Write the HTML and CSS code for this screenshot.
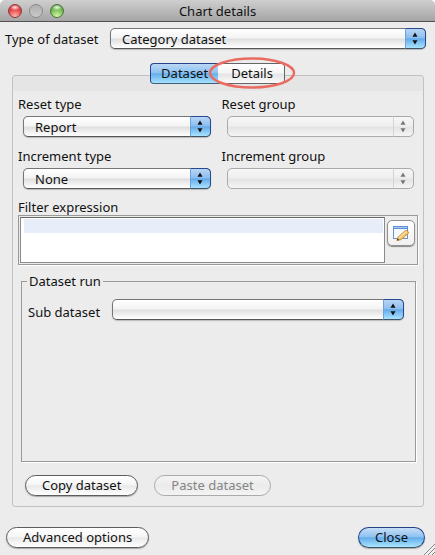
FILE: index.html
```html
<!DOCTYPE html>
<html lang="en">
<head>
<meta charset="utf-8">
<title>Chart details</title>
<link rel="stylesheet" href="styles.css">
</head>
<body>
<svg class="defs" aria-hidden="true">
  <symbol id="arrows" viewBox="0 0 6 14"><path d="M3 0.5L5.7 5H0.3Z M3 13.5L0.3 9H5.7Z" fill="currentColor"/></symbol>
</svg>
<div class="window">
  <header class="titlebar">
    <div class="lights">
      <button class="light red" type="button" aria-label="Close window"></button>
      <button class="light gray" type="button" aria-label="Minimize" disabled></button>
      <button class="light green" type="button" aria-label="Zoom"></button>
    </div>
    <h1>Chart details</h1>
  </header>

  <div class="type-row">
    <label for="type">Type of dataset</label>
    <div class="select">
      <select id="type"><option>Category dataset</option></select>
      <svg><use href="#arrows"/></svg>
    </div>
  </div>

  <div class="tabs" role="tablist">
    <button class="tab active" type="button" role="tab" aria-selected="true">Dataset</button>
    <button class="tab" type="button" role="tab" aria-selected="false">Details
      <svg class="ring" viewBox="0 0 88 32" aria-hidden="true"><ellipse cx="44" cy="16" rx="42" ry="14.5" fill="none" stroke="#ea6c61" stroke-width="2.5"/></svg>
    </button>
  </div>

  <main class="panel" role="tabpanel">
    <div class="fields">
      <div class="field">
        <label for="reset-type">Reset type</label>
        <div class="select"><select id="reset-type"><option>Report</option></select><svg><use href="#arrows"/></svg></div>
      </div>
      <div class="field">
        <label for="reset-group">Reset group</label>
        <div class="select disabled"><select id="reset-group" disabled></select><svg><use href="#arrows"/></svg></div>
      </div>
      <div class="field">
        <label for="inc-type">Increment type</label>
        <div class="select"><select id="inc-type"><option>None</option></select><svg><use href="#arrows"/></svg></div>
      </div>
      <div class="field">
        <label for="inc-group">Increment group</label>
        <div class="select disabled"><select id="inc-group" disabled></select><svg><use href="#arrows"/></svg></div>
      </div>
    </div>

    <label class="filter-label" for="filter">Filter expression</label>
    <div class="filter">
      <textarea id="filter"></textarea>
      <button class="edit" type="button" aria-label="Edit expression">
        <svg viewBox="0 0 18 18">
          <rect x="1.5" y="2.5" width="14" height="12" fill="#f5faff" stroke="#7291bf"/>
          <path d="M1 2h15v3H1z" fill="#5f8fd5"/>
          <path d="M2 3h13v1H2z" fill="#a6caf5"/>
          <path d="M5 16.5L6 13.2L13.3 6.6Q15.2 5.8 16.5 8.2L16.3 9.4L9 15.7Z" fill="#f6c264" stroke="#bd8334" stroke-width=".8"/>
          <path d="M7 14L14.5 7.4" stroke="#ffe6a1" stroke-width="1.2"/>
          <path d="M5 16.5L5.7 14.2L7.3 16Z" fill="#493728"/>
        </svg>
      </button>
    </div>

    <fieldset class="run">
      <legend>Dataset run</legend>
      <div class="sub-row">
        <label for="sub">Sub dataset</label>
        <div class="select"><select id="sub"></select><svg><use href="#arrows"/></svg></div>
      </div>
    </fieldset>

    <div class="actions">
      <button class="pill" type="button">Copy dataset</button>
      <button class="pill" type="button" disabled>Paste dataset</button>
    </div>
  </main>

  <footer class="footer">
    <button class="pill" type="button">Advanced options</button>
    <button class="pill primary" type="button">Close</button>
  </footer>
  <svg class="grip" viewBox="0 0 12 12" aria-hidden="true">
    <path d="M1 12L12 1M5 12L12 5M9 12L12 9" stroke="#858585"/>
    <path d="M2.2 12L12 2.2M6.2 12L12 6.2" stroke="#fff" stroke-width=".7"/>
  </svg>
</div>
</body>
</html>
```

FILE: styles.css
```css
*, *::before, *::after { box-sizing: border-box; }

body {
  margin: 0;
  background: #fff;
  color: #111;
  font: 13px/16px "Noto Sans", "Open Sans", sans-serif;
}

button, select, textarea { font: inherit; color: inherit; margin: 0; }

.defs { position: absolute; width: 0; height: 0; }

.window {
  position: relative;
  display: flex;
  flex-direction: column;
  min-height: 100vh;
  background: #ececec;
  border-radius: 5px 5px 0 0;
}

.titlebar {
  display: grid;
  grid-template-columns: 1fr auto 1fr;
  align-items: center;
  height: 22px;
  padding: 0 8px;
  background: linear-gradient(#cfcfcf, #a5a5a5);
  border-bottom: 1px solid #515151;
  border-radius: 5px 5px 0 0;
}

.titlebar h1 { margin: 0; font-size: 13px; font-weight: 400; }

.lights { display: flex; gap: 7px; }

.light {
  width: 14px;
  height: 14px;
  padding: 0;
  border: 1px solid #777;
  border-radius: 50%;
}

.red {
  border-color: #8c3a3a;
  background: radial-gradient(ellipse 5px 3px at 50% 20%, #ffe9e9, transparent), radial-gradient(circle at 50% 95%, #ffb9b0, #e5484a 55%, #c0303a);
}

.gray {
  border-color: #8b8b8b;
  background: linear-gradient(#b0b0b0, #c9c9c9);
}

.green {
  border-color: #4b7339;
  background: radial-gradient(ellipse 5px 3px at 50% 20%, #f2ffea, transparent), radial-gradient(circle at 50% 95%, #d6f8aa, #7abd58 55%, #508f40);
}

.type-row {
  display: flex;
  align-items: center;
  gap: 6px;
  padding: 6px 9px 0 5px;
}

.type-row label { flex: 0 0 99px; white-space: nowrap; }

.select { position: relative; flex: 1; height: 21px; }

.select select {
  display: block;
  appearance: none;
  width: 100%;
  height: 21px;
  padding: 0 24px 0 11px;
  border: 1px solid #757575;
  border-bottom-color: #555;
  border-radius: 5px;
  background: linear-gradient(#fff, #f4f4f4 45%, #e0e0e0 55%, #fff);
  box-shadow: 0 1px 1px #bbb;
  opacity: 1;
}

.select::after {
  content: "";
  position: absolute;
  top: 0;
  right: 0;
  width: 21px;
  height: 21px;
  border: 1px solid #254a91;
  border-bottom-color: #3f5165;
  border-left-color: #6ea3d9;
  border-radius: 0 5px 5px 0;
  background: linear-gradient(#b9d5f3, #8dbff0 45%, #65abea 52%, #a9e4ff);
  pointer-events: none;
}

.select svg {
  position: absolute;
  z-index: 1;
  top: 4px;
  right: 8px;
  width: 6px;
  height: 13px;
  color: #111;
  pointer-events: none;
}

.disabled select {
  border-color: #aaa;
  background: linear-gradient(#f6f6f6, #efefef 45%, #e4e4e4 55%, #f5f5f5);
  box-shadow: none;
}

.disabled::after {
  border-color: transparent transparent transparent #d5d5d5;
  background: none;
}

.disabled svg { color: #777; }

.tabs {
  position: relative;
  z-index: 1;
  display: flex;
  justify-content: center;
  margin: 14px 0 -9px;
}

.tab {
  position: relative;
  height: 21px;
  padding: 0 9px;
  border: 1px solid #666;
  border-left: 0;
  border-radius: 0 4px 4px 0;
  background: linear-gradient(#fff, #f5f5f5 45%, #e5e5e5 55%, #fafafa);
  line-height: 19px;
}

.tab:last-child { padding: 0 11px 0 13px; }

.tab.active {
  padding: 0 10px;
  border: 1px solid #24458d;
  border-bottom-color: #416078;
  border-right: 0;
  border-radius: 4px 0 0 4px;
  background: linear-gradient(#bbd8f5, #8fc2f1 45%, #67afea 52%, #a5e2ff);
}

.ring {
  position: absolute;
  top: -7px;
  left: -10px;
  width: 88px;
  height: 32px;
  pointer-events: none;
}

.panel {
  display: flex;
  flex: 1;
  flex-direction: column;
  margin: 0 11px 0 12px;
  padding: 20px 5px 10px;
  border: 1px solid #c1c1c1;
  border-radius: 3px;
  background: linear-gradient(#e5e5e5 15px, #ececec 15px);
}

.fields {
  display: grid;
  grid-template-columns: 1fr 1fr;
  gap: 11px;
  margin-right: 4px;
}

.field {
  display: flex;
  flex-direction: column;
  gap: 4px;
}

.field .select { flex: none; margin-left: 5px; }

.filter-label { margin-top: 10px; }

.filter {
  display: flex;
  align-items: flex-start;
  gap: 2px;
  padding: 1px 2px 1px 1px;
  border: 1px solid #999;
  box-shadow: 1px 1px 0 #fff;
}

.filter textarea {
  flex: 1;
  min-width: 0;
  height: 46px;
  padding: 1px 3px;
  border: 1px solid #8a8a8a;
  border-top-color: #666;
  outline: 0;
  resize: none;
  background: linear-gradient(#e7eef9, #e7eef9) 3px 1px / calc(100% - 4px) 14px no-repeat #fff;
}

.edit {
  display: grid;
  place-items: center;
  width: 28px;
  height: 26px;
  margin-top: 3px;
  padding: 0;
  border: 1px solid #909090;
  border-radius: 5px;
  background: linear-gradient(#fff, #f0f0f0);
  box-shadow: 0 1px 1px #888;
}

.edit svg { width: 18px; height: 18px; }

.run {
  flex: 1;
  min-width: 0;
  margin: 8px 2px 0 3px;
  padding: 10px 11px 0 6px;
  border: 1px solid #999;
  box-shadow: 1px 1px 0 #fff;
}

.run legend { padding: 0 2px; margin-left: -1px; }

.sub-row { display: flex; align-items: flex-end; }

.sub-row label { flex: 0 0 84px; }

.actions {
  display: flex;
  gap: 16px;
  margin: 13px 7px 0;
}

.pill {
  height: 21px;
  padding: 0 16px;
  border: 1px solid #5c5c5c;
  border-radius: 11px;
  background: linear-gradient(#fff, #f6f6f6 45%, #e9e9e9 52%, #fff);
  box-shadow: 0 1px 1px #aaa;
  line-height: 19px;
  white-space: nowrap;
}

.pill:disabled {
  border-color: #aaa;
  background: linear-gradient(#f4f4f4, #ebebeb 52%, #f4f4f4);
  box-shadow: none;
  color: #858585;
}

.primary {
  border-color: #24418a;
  border-bottom-color: #3c5368;
  background: linear-gradient(#c7def6, #91c3f2 45%, #64adeb 52%, #a9e7ff);
}

.footer {
  display: flex;
  justify-content: space-between;
  padding: 20px 10px 7px 6px;
}

.grip {
  position: absolute;
  right: 0;
  bottom: 0;
  width: 12px;
  height: 12px;
}
```
